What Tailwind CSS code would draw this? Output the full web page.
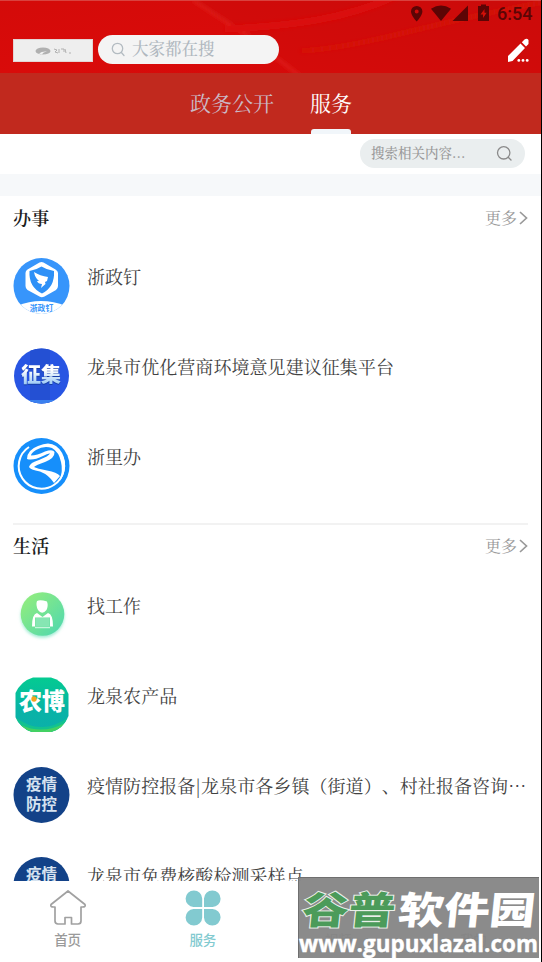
<!DOCTYPE html>
<html lang="zh-CN">
<head>
<meta charset="utf-8">
<meta name="viewport" content="width=device-width, initial-scale=1">
<title>服务</title>
<script src="https://cdn.jsdelivr.net/npm/@tailwindcss/browser@4"></script>
</head>
<body class="bg-white font-['Noto_Serif_CJK_SC','Noto_Sans_CJK_SC',serif] text-[#424242] [text-spacing-trim:space-all]">
<div class="relative flex h-[962px] w-[542px] flex-col overflow-hidden border-r border-black bg-white">
  <header class="relative h-[73px] shrink-0 bg-[#d50a09]">
    <svg class="absolute inset-0" width="541" height="73" viewBox="0 0 541 73" preserveAspectRatio="none">
      <defs>
        <linearGradient id="sheen" x1="0" y1="0" x2="1" y2="1"><stop offset="0" stop-color="#d40b09"/><stop offset=".5" stop-color="#d90b0a"/><stop offset="1" stop-color="#d20909"/></linearGradient>
        <linearGradient id="fold" x1="0" y1="1" x2="1" y2="0"><stop offset="0" stop-color="#d60b0a"/><stop offset="1" stop-color="#cb0b0a"/></linearGradient>
        <filter id="soft" x="-5%" y="-30%" width="110%" height="160%"><feGaussianBlur stdDeviation="2"/></filter>
      </defs>
      <rect width="541" height="73" fill="url(#sheen)"/>
      <path d="M193 0L245 34L300 73H541V0Z" fill="url(#fold)"/>
      <g filter="url(#soft)" fill="none">
        <path d="M193 0L245 34L300 76" stroke="#e42a27" stroke-width="2"/>
        <path d="M225 29C290 26 345 20 400 -6" stroke="#dc0f0c" stroke-width="7"/>
        <path d="M300 51C370 47 425 23 545 2" stroke="#d91411" stroke-width="3"/>
      </g>
      <path d="M0 .5H541" stroke="#d9423f"/>
    </svg>
    <div class="relative flex h-[73px] items-start">
      <div class="ml-[13px] mt-[39px] flex h-[23px] w-[80px] items-center justify-center border border-[#e3d4d4] bg-[#eee]">
        <svg width="38" height="10" viewBox="0 0 38 10"><ellipse cx="9" cy="5" rx="7.500" ry="3.600" fill="#b0b0b0"/><path d="M5 7.500Q8 5 13 5.500Q9 6 8 8.500Z" fill="#f2f2f2"/><path d="M20 3l3 1-2 2 3 1M25 3v4M27 3h3v3M31 3l1 4M35 7h2" fill="none" stroke="#aaa" stroke-width=".9"/></svg>
      </div>
      <div class="ml-[5px] mt-[35px] flex h-[29px] w-[181px] items-center rounded-full bg-[#f4f4f4] pl-[13px]">
        <svg width="15" height="15" viewBox="0 0 15 15" fill="none" stroke="#b4bcc2" stroke-width="1.300" stroke-linecap="round"><circle cx="6.500" cy="6.500" r="5.200"/><path d="M10.400 10.500L13 13.500"/></svg>
        <span class="ml-[6px] -mt-[3px] text-[16.5px] font-medium leading-[26px] text-[#b0b8bf]">大家都在搜</span>
      </div>
    </div>
    <div class="absolute right-[8px] top-[4px] flex h-[20px] items-center text-[#5c0505]">
      <svg width="84" height="20" viewBox="0 0 84 20" fill="currentColor" class="mr-[2px]">
        <path fill-rule="evenodd" d="M5.700 2A5.600 5.600 0 0 0 0 7.600C0 11.600 5.700 17.600 5.700 17.600S11.400 11.600 11.400 7.600A5.600 5.600 0 0 0 5.700 2ZM5.700 5.600A2 2 0 1 1 5.700 9.600A2 2 0 0 1 5.700 5.600Z"/>
        <path d="M20 4.800Q30 -2 40 4.800L30 17Z"/><path d="M41.500 17L57 1.500V17Z"/>
        <path fill-rule="evenodd" d="M67 2h3V.5h5V2h3v15H67ZM73.500 5L69.500 10.400H72V14L75.700 8.800H73.500Z"/>
      </svg>
      <span class="w-[36px] whitespace-nowrap font-[Roboto,sans-serif] text-[18px] font-medium leading-[20px]">6:54</span>
    </div>
    <svg class="absolute left-[506px] top-[38px]" width="24" height="25" viewBox="0 0 24 25" fill="#fff"><path d="M2 24V18L14.500 5.500L19 10L6.500 23ZM15.800 4.200L18.500 1.500Q21 0 22.500 2V6L20 8.600Z"/><circle cx="12.800" cy="22.400" r="1.400"/><circle cx="17" cy="22.400" r="1.400"/><circle cx="21.200" cy="22.400" r="1.400"/></svg>
  </header>

  <nav class="flex h-[61px] shrink-0 justify-center gap-[36px] bg-[#c1291e] pl-px text-[21px] leading-[58px]">
    <span class="text-[#cbb9c5]">政务公开</span>
    <span class="relative text-white">服务<i class="absolute bottom-0 left-px h-[5px] w-[40px] rounded-t-[3px] bg-[#f1f6fa]"></i></span>
  </nav>

  <div class="flex h-[40px] shrink-0 justify-end pr-[16px] pt-[5px]">
    <div class="flex h-[29px] w-[165px] items-center justify-between rounded-full bg-[#eaeeef] pl-[11px] pr-[12px]">
      <span class="-mt-[3px] text-[13.5px] font-medium leading-[26px] text-[#999]">搜索相关内容...</span>
      <svg width="17" height="17" viewBox="0 0 17 17" fill="none" stroke="#8a8a8a" stroke-width="1.300" stroke-linecap="round"><circle cx="7.700" cy="7.800" r="6.200"/><path d="M12.200 12.300L15 15"/></svg>
    </div>
  </div>
  <div class="h-[22px] shrink-0 bg-[#f6f8fa]"></div>

  <main class="min-h-0 flex-1 overflow-hidden px-[13px]">
    <section class="h-[327px]">
      <div class="flex h-[44px] items-center justify-between">
        <h2 class="-mt-[2px] text-[18px] font-semibold leading-[26px] tracking-[0.2px] text-[#202020]">办事</h2>
        <span class="flex items-center text-[16px] leading-[24px] text-[#999]">更多<svg class="ml-[2px]" width="9" height="16" viewBox="0 0 9 16" fill="none" stroke="#999" stroke-width="1.700"><path d="M1 2L7.500 8L1 14"/></svg></span>
      </div>
      <ul class="pt-[18px] text-[18px] tracking-[0.06px]">
        <li class="flex h-[90px] gap-[18px]">
          <svg width="57" height="56" viewBox="0 0 57 56"><clipPath id="a"><circle cx="28.500" cy="28" r="28"/></clipPath><g clip-path="url(#a)"><rect width="57" height="56" fill="#3795fb"/><path d="M4 48Q28 38 53 48V56H4Z" fill="#fff"/><path d="M26.500 4.500Q28.500 3.500 30.500 4.500L42.500 11.500Q45 13 45 15V28Q45 30.500 43 32L31.500 38.500Q28.500 40 26.500 38.500L14.500 32Q12.500 30.500 12.500 28V15Q12.500 12.500 14.500 11.500Z" fill="#fff"/><path d="M28.500 8.500Q34 12 41 13Q42 29 29 35.500Q15.500 29 16.500 13Q23 12 28.500 8.500Z" fill="#2d90f7"/><path d="M21 14Q27 18 35 19L34 23L32 24L32.500 26L28 30L29 26Q25 26 24 23L26 23Q22 20 21 14Z" fill="#fff"/></g><text x="28.500" y="52.500" text-anchor="middle" font-family="Noto Sans CJK SC,sans-serif" font-size="7.800" font-weight="700" fill="#3795fb">浙政钉</text></svg>
          <span class="-ml-px pt-[5px] leading-[27px]">浙政钉</span>
        </li>
        <li class="flex h-[90px] gap-[18px]">
          <svg width="56" height="56" viewBox="0 0 56 56"><defs><linearGradient id="b" x1="0" y1="0" x2="0" y2="1"><stop offset=".4" stop-color="#fff"/><stop offset="1" stop-color="#84bdf2"/></linearGradient><clipPath id="b2"><circle cx="28.500" cy="28" r="27.500"/></clipPath></defs><g clip-path="url(#b2)"><rect width="56" height="56" fill="#2855e3"/><path d="M17 0H37V56H17Z" fill="#2450d3"/><path d="M0 52H56V56H0Z" fill="#3a80ef"/></g><text x="8" y="33.500" textLength="40" lengthAdjust="spacingAndGlyphs" font-family="Noto Sans CJK SC,sans-serif" font-size="20" font-weight="900" fill="url(#b)" style="filter:drop-shadow(.7px 1px 0 #173da7)">征集</text></svg>
          <span class="pt-[5px] leading-[27px]">龙泉市优化营商环境意见建议征集平台</span>
        </li>
        <li class="flex h-[90px] gap-[18px]">
          <svg width="57" height="56" viewBox="0 0 57 56"><circle cx="28.500" cy="28" r="28" fill="#168ffb"/><path d="M16 9A22.700 22.700 0 1 0 47 15" fill="none" stroke="#fff" stroke-width="2"/><path d="M14 21Q14 12 25 8Q36 3 43 8Q50 13 52 24Q53 34 47 43Q50 32 48 24Q46 14 39 10Q31 7 23 12Q18 15 18 17.500Q24 17.500 32 13.500Q40 11 41.500 14Q42 20 32 24Q23 27 21 29Q24 30.500 34 32.500Q44 34 47 38L41 45Q36 37 27 33.500Q17 31.500 16 29Q17 24.500 26 22Q36 18 37 15.500Q35 15 30 18Q20 23 14 21Z" fill="#fff"/></svg>
          <span class="-ml-px pt-[5px] leading-[27px]">浙里办</span>
        </li>
      </ul>
    </section>
    <section class="border-t-2 border-[#f2f2f2]">
      <div class="flex h-[42px] items-center justify-between">
        <h2 class="-mt-[2px] text-[18px] font-semibold leading-[26px] tracking-[0.2px] text-[#202020]">生活</h2>
        <span class="flex items-center text-[16px] leading-[24px] text-[#999]">更多<svg class="ml-[2px]" width="9" height="16" viewBox="0 0 9 16" fill="none" stroke="#999" stroke-width="1.700"><path d="M1 2L7.500 8L1 14"/></svg></span>
      </div>
      <ul class="pt-[19px] text-[18px] tracking-[0.06px]">
        <li class="flex h-[90px] gap-[18px]">
          <svg width="56" height="56" viewBox="0 0 56 56"><defs><linearGradient id="d" x1="0" y1="0" x2="1" y2="1"><stop stop-color="#98ef79"/><stop offset="1" stop-color="#4cd7b1"/></linearGradient><filter id="ds" x="-20%" y="-20%" width="140%" height="150%"><feDropShadow dx="0" dy="2" stdDeviation="1.800" flood-color="#57dcb0" flood-opacity=".55"/></filter></defs><circle cx="29.500" cy="28" r="21.800" fill="url(#d)" filter="url(#ds)"/><path d="M24 15Q27 13.500 34 15.500Q35.500 20 33.500 24Q29 29.500 25 24Q22.500 19 24 15Z" fill="#fff"/><path d="M24 27L29.500 31L35 27Q40 28 40 40.500H37V31.500H22V40.500H19Q19 28 24 27Z" fill="#fff"/><path d="M22.500 32H36.500V40H22.500Z" fill="#86e6b3"/><path d="M22 41.500H37" stroke="#c5f5dc" stroke-width="1.500"/></svg>
          <span class="pt-[6px] leading-[27px]">找工作</span>
        </li>
        <li class="flex h-[90px] gap-[18px]">
          <svg width="56" height="56" viewBox="0 0 56 56"><defs><linearGradient id="e" x1="0" y1="0" x2="0" y2="1"><stop stop-color="#04cc90"/><stop offset=".6" stop-color="#08b3a6"/><stop offset="1" stop-color="#0cafab"/></linearGradient><clipPath id="e2"><path d="M20 1.500H38Q50 4 55.500 18V40Q50 53 38 56H19Q7 52 2.500 41V17Q8 5 20 1.500Z"/></clipPath></defs><g clip-path="url(#e2)"><rect width="56" height="57" fill="url(#e)"/><path d="M2 41Q28 61 56 41V57H2Z" fill="#12c290"/><path d="M8 49Q30 59 52 47L46 56H13Z" fill="#43d163"/></g><text x="6" y="34" textLength="46" lengthAdjust="spacingAndGlyphs" font-family="Noto Sans CJK SC,sans-serif" font-size="24" font-weight="900" fill="#fff">农博</text><circle cx="21" cy="23" r="2.700" fill="#f5a51d"/></svg>
          <span class="pt-[6px] leading-[27px]">龙泉农产品</span>
        </li>
        <li class="flex h-[90px] gap-[18px]">
          <svg class="shrink-0" width="57" height="57" viewBox="0 0 57 57"><circle cx="28.500" cy="29" r="28" fill="#134288"/><g font-family="Noto Sans CJK SC,sans-serif" font-size="15.500" font-weight="700" fill="#d6e2f0"><text x="13" y="23.500">疫情</text><text x="13" y="43.500">防控</text></g></svg>
          <span class="-ml-px min-w-0 whitespace-nowrap pt-[6px] leading-[27px]">疫情防控报备|龙泉市各乡镇（街道）、村社报备咨询⋯</span>
        </li>
        <li class="flex h-[90px] gap-[18px]">
          <svg class="shrink-0" width="57" height="57" viewBox="0 0 57 57"><circle cx="28.500" cy="29" r="28" fill="#134288"/><g font-family="Noto Sans CJK SC,sans-serif" font-size="15.500" font-weight="700" fill="#d6e2f0"><text x="13" y="23.500">疫情</text><text x="13" y="43.500">防控</text></g></svg>
          <span class="-ml-px pt-[6px] leading-[27px]">龙泉市免费核酸检测采样点</span>
        </li>
      </ul>
    </section>
  </main>

  <footer class="grid h-[81px] shrink-0 grid-cols-4 bg-white font-['Noto_Sans_CJK_SC',sans-serif] text-[13.5px] font-medium leading-[20px] text-[#9a9a9a]">
    <div class="flex flex-col items-center pt-[8px]">
      <svg width="38" height="38" viewBox="0 0 38 38" fill="none" stroke="#a1a1a1" stroke-width="1.700" stroke-linejoin="round"><path d="M19 2L36 15.500Q37 18 33.500 18H32V32Q32 35 29 35H22.500V28.500H16V35H9Q6 35 6 32V18H4.500Q1 18 2 15.500Z"/></svg>
      <span class="mt-[2px]">首页</span>
    </div>
    <div class="flex flex-col items-center pt-[8px] text-[#82cad0]">
      <svg width="38" height="38" viewBox="0 0 38 38" fill="#82cad0"><path d="M18.200 18H9.500A8.300 8.300 0 1 1 18.200 9.500ZM20 18V9.500A8.300 8.300 0 1 1 28.500 18ZM18.200 20V28.500A8.300 8.300 0 1 1 9.500 20ZM20 20H28.500A8.300 8.300 0 1 1 20 28.500Z"/></svg>
      <span class="mt-[2px]">服务</span>
    </div>
    <div class="flex flex-col items-center pt-[48px]">视频</div>
    <div class="flex flex-col items-center pt-[48px]">我的</div>
  </footer>

  <svg class="absolute left-[298px] top-[877px]" width="241" height="81" viewBox="0 0 241 81">
    <rect width="241" height="81" fill="#858585" fill-opacity=".95"/><path d="M.5 81V.5H241" fill="none" stroke="#6f6f6f"/>
    <g font-family="Noto Sans CJK SC,sans-serif" font-size="38" font-weight="900" transform="translate(0 47) skewX(-6)">
      <text x="3" y="0" textLength="93" lengthAdjust="spacingAndGlyphs" fill="#4c9b5a" stroke="#e9efe9" stroke-width="2" paint-order="stroke">谷普</text>
      <text x="99" y="0" textLength="137" lengthAdjust="spacingAndGlyphs" fill="#fff">软件园</text>
    </g>
    <text x="1" y="74.500" textLength="239" lengthAdjust="spacingAndGlyphs" font-family="Open Sans,Noto Sans,sans-serif" font-size="24" font-weight="700" fill="#fff" stroke="#fff" stroke-width=".4">www.gupuxlazal.com</text>
  </svg>
</div>
</body>
</html>
